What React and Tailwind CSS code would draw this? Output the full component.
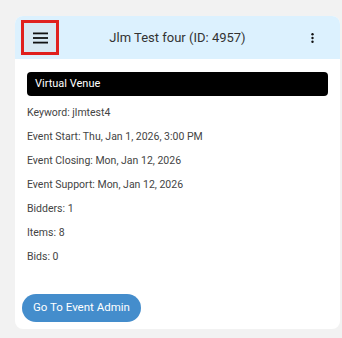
export default function App() {
  const rows = [
    "Keyword: jlmtest4",
    "Event Start: Thu, Jan 1, 2026, 3:00 PM",
    "Event Closing: Mon, Jan 12, 2026",
    "Event Support: Mon, Jan 12, 2026",
    "Bidders: 1",
    "Items: 8",
    "Bids: 0",
  ];

  return (
    <div className="min-h-[338px] bg-[#f2f2f2] pt-4 pl-[15px] pr-[2px] pb-[10px] font-['Roboto',sans-serif]">
      <div className="w-[325px] overflow-hidden rounded-lg bg-white">
        {/* Header */}
        <div className="grid h-[43px] grid-cols-[50px_1fr_50px] items-center bg-[#dcf1fe]">
          <div className="flex pl-[6px]">
            <button className="flex h-[35px] w-[38px] items-center justify-center border-[3px] border-[#e0201d] bg-[#d8e8f2]">
              <svg width="15" height="12" viewBox="0 0 15 12">
                <rect x="0" y="0.5" width="15" height="1.8" fill="#111" />
                <rect x="0" y="5.1" width="15" height="1.8" fill="#111" />
                <rect x="0" y="9.7" width="15" height="1.8" fill="#111" />
              </svg>
            </button>
          </div>
          <div className="text-center text-[13px] text-[#333]">Jlm Test four (ID: 4957)</div>
          <div className="flex justify-end pr-[26px]">
            <svg width="3" height="10" viewBox="0 0 3 10">
              <circle cx="1.5" cy="1.3" r="1.2" fill="#111" />
              <circle cx="1.5" cy="5" r="1.2" fill="#111" />
              <circle cx="1.5" cy="8.7" r="1.2" fill="#111" />
            </svg>
          </div>
        </div>

        {/* Body */}
        <div className="px-3 pt-[13px] pb-[7px]">
          <div className="flex h-6 items-center rounded bg-black px-2 text-[11px] text-white">
            Virtual Venue
          </div>
          <div className="mt-[5px] flex flex-col">
            {rows.map((r) => (
              <div key={r} className="flex h-6 items-center text-[10.5px] text-[#444]">
                {r}
              </div>
            ))}
          </div>
          <button className="ml-[-5px] mt-[25px] h-[28px] rounded-full bg-[#448dcc] px-[11px] text-[11.5px] text-white">
            Go To Event Admin
          </button>
        </div>
      </div>
    </div>
  );
}
